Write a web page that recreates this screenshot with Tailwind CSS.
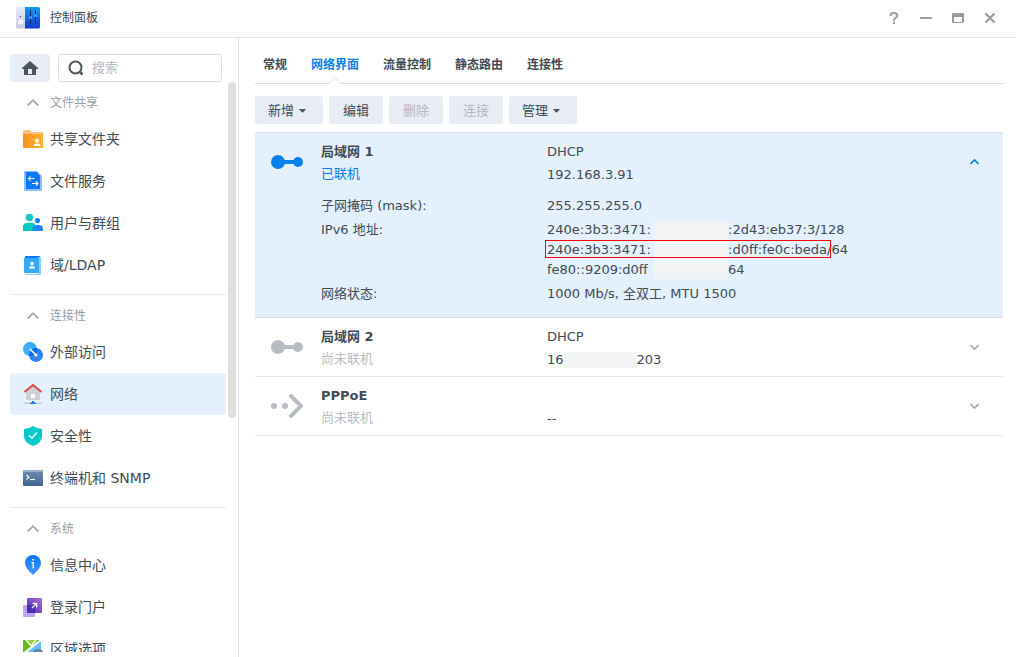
<!DOCTYPE html>
<html lang="zh-CN">
<head>
<meta charset="utf-8">
<meta name="viewport" content="width=device-width, initial-scale=1">
<title>控制面板</title>
<script src="https://cdn.jsdelivr.net/npm/@tailwindcss/browser@4"></script>
</head>
<body class="flex h-screen flex-col overflow-hidden bg-white font-['DejaVu_Sans','Noto_Sans_CJK_SC',sans-serif] text-[13px] text-[#414b55]">
<header class="flex h-[38px] shrink-0 items-center justify-between border-b border-[#e0e6ec] pr-[18px] pb-px pl-4">
  <div class="flex items-center gap-[10px]">
    <svg class="size-6" viewBox="0 0 24 24" aria-hidden="true">
      <defs>
        <linearGradient id="panelBlue" x1="0" y1="0" x2="0" y2="1"><stop stop-color="#0b9cf2"/><stop offset="1" stop-color="#1636cf"/></linearGradient>
        <linearGradient id="panelGray" x1="0" y1="0" x2="0" y2="1"><stop stop-color="#e9ebfb"/><stop offset="1" stop-color="#c5c9e4"/></linearGradient>
      </defs>
      <path d="M1.500 1H10V22.500H1.500Q0 22.500 0 21V2.500Q0 1 1.500 1Z" fill="url(#panelGray)"/>
      <path d="M9 1H22.500Q24 1 24 2.500V21Q24 22.500 22.500 22.500H9Z" fill="url(#panelBlue)"/>
      <circle cx="4.500" cy="10.500" r=".7" fill="#444b60"/><circle cx="4.500" cy="16" r="3" fill="#f6f6ff" stroke="#b9bdd8" stroke-width=".5"/>
      <path d="M14.500 4V18M19.500 4V18" stroke="#0b2a63" stroke-width="1"/>
      <circle cx="14.500" cy="11.500" r="1.600" fill="#39a7fb"/><circle cx="19.500" cy="9.500" r="1.600" fill="#39a7fb"/>
    </svg>
    <h1 class="text-xs">控制面板</h1>
  </div>
  <div class="flex gap-4 text-[#989ea7]">
    <button aria-label="帮助" class="size-4"><svg class="size-4" viewBox="0 0 16 16" fill="none" stroke="currentColor" stroke-width="2"><path d="M4.700 6V5Q4.700 3 8 3Q11.300 3 11.300 5.500Q11.300 7 9.500 7.800Q8 8.600 8 11M8 12V14"/></svg></button>
    <button aria-label="最小化" class="size-4"><svg class="size-4" viewBox="0 0 16 16" fill="currentColor"><path d="M2 7H14V9H2Z"/></svg></button>
    <button aria-label="最大化" class="size-4"><svg class="size-4" viewBox="0 0 16 16" fill="currentColor" fill-rule="evenodd"><path d="M3 3H13Q14 3 14 4V12Q14 13 13 13H3Q2 13 2 12V4Q2 3 3 3ZM4 7V12H12V7Z"/></svg></button>
    <button aria-label="关闭" class="size-4"><svg class="size-4" viewBox="0 0 16 16" fill="none" stroke="currentColor" stroke-width="2.300"><path d="M3.500 3.500L12.500 12.500M12.500 3.500L3.500 12.500"/></svg></button>
  </div>
</header>
<div class="flex min-h-0 flex-1">
  <aside class="flex w-[239px] shrink-0 flex-col border-r border-[#e0e6ec] pt-4 pr-[2px] pb-[5px] pl-[10px]">
    <div class="flex shrink-0 gap-2 pr-[14px]">
      <button aria-label="主页" class="grid h-7 w-10 place-items-center rounded-[3px] bg-[#e8edf5]"><svg class="size-4" viewBox="0 0 16 16" fill="#4b5662" fill-rule="evenodd"><path d="M8 1L16 8V9H14V15H2V9H0V8ZM6 9V14H10V9Z"/></svg></button>
      <div class="flex h-7 min-w-0 flex-1 items-center gap-2 rounded-[3px] border border-[#d5dfe8] pl-[9px]">
        <svg class="size-4 shrink-0" viewBox="0 0 16 16" fill="none" stroke="#4b5662" stroke-width="2"><circle cx="7.500" cy="7.500" r="6"/><path d="M11.500 11.500L14.500 14.500" stroke-width="2.500"/></svg>
        <input type="search" aria-label="搜索" placeholder="搜索" class="w-full min-w-0 text-[13px] outline-none placeholder:text-[#b4bac1]">
      </div>
    </div>
    <div class="flex min-h-0 flex-1 gap-[2px]">
      <nav class="min-w-0 flex-1 overflow-hidden" aria-label="控制面板">
        <section class="pb-2">
          <button aria-expanded="true" class="flex h-9 w-full items-center gap-[10px] pt-[6px] pl-4 text-xs text-[#989ea6]"><svg class="mx-[1px] h-3 w-3" viewBox="0 0 12 12" fill="none" stroke="#a5abb2" stroke-width="1.800"><path d="M.7 8.500L6 3.200L11.300 8.500"/></svg><span>文件共享</span></button>
          <a href="#share" class="flex h-[42px] items-center gap-[7px] rounded pl-[13px] text-sm">
            <svg class="size-5" viewBox="0 0 20 20"><defs><linearGradient id="folder"><stop stop-color="#fa911e"/><stop offset="1" stop-color="#ffb52f"/></linearGradient></defs><path d="M1 1H7L9 3H19Q20 3 20 4V8H0V2Q0 1 1 1Z" fill="#ffc37c"/><path d="M0 5H20V18Q20 19 19 19H1Q0 19 0 18Z" fill="url(#folder)"/><circle cx="14" cy="11.700" r="2" fill="#fff"/><path d="M10.500 17Q10.500 14.800 12.500 14.800H15.500Q17.500 14.800 17.500 17Z" fill="#fff"/></svg>
            <span>共享文件夹</span></a>
          <a href="#files" class="flex h-[42px] items-center gap-[7px] rounded pl-[13px] text-sm">
            <svg class="size-5" viewBox="0 0 20 20"><path d="M2 0H14L19 5V19Q19 20 18 20H2Q1 20 1 19V1Q1 0 2 0Z" fill="#8fbcff"/><path d="M3 1H13.500L17 4.500V18H3Z" fill="#0879fa"/><path d="M11.500 7.500H5.500M7.500 5.500L5.500 7.500L7.500 9.500M9 12.500H15M13 10.500L15 12.500L13 14.500" fill="none" stroke="#fff" stroke-width="1.200"/></svg>
            <span>文件服务</span></a>
          <a href="#users" class="flex h-[42px] items-center gap-[7px] rounded pl-[13px] text-sm">
            <svg class="size-5" viewBox="0 0 20 20"><circle cx="6.500" cy="4.500" r="3.700" fill="#1bc6cb"/><circle cx="14.500" cy="7.500" r="2.600" fill="#1484f5"/><path d="M10 18Q10 11.800 14.500 11.800Q20 11.800 20 16V18Z" fill="#2582ff"/><path d="M0 18V14Q0 9.800 5 9.800H8Q13 9.800 13 14V18Z" fill="#00ccc5"/><path d="M9 18Q9 12 13 12V18Z" fill="#079fd5"/></svg>
            <span>用户与群组</span></a>
          <a href="#domain" class="flex h-[42px] items-center gap-[7px] rounded pl-[13px] text-sm">
            <svg class="size-5" viewBox="0 0 20 20"><path d="M3 1H17V4H2V2Q2 1 3 1Z" fill="#0876f8"/><path d="M15 2H18V19Q18 20 17 20H3L2 19H15Z" fill="#8ccfff"/><path d="M1 3H16V18H2Q1 18 1 17Z" fill="#35a8fc"/><circle cx="9" cy="8.500" r="1.800" fill="#fff"/><path d="M6 13.500Q6 11.300 8 11.300H10Q12 11.300 12 13.500Z" fill="#fff"/></svg>
            <span>域/LDAP</span></a>
        </section>
        <section class="border-t border-[#e4ebf2] pb-2">
          <button aria-expanded="true" class="flex h-9 w-full items-center gap-[10px] pt-[6px] pl-4 text-xs text-[#989ea6]"><svg class="mx-[1px] h-3 w-3" viewBox="0 0 12 12" fill="none" stroke="#a5abb2" stroke-width="1.800"><path d="M.7 8.500L6 3.200L11.300 8.500"/></svg><span>连接性</span></button>
          <a href="#external" class="flex h-[42px] items-center gap-[7px] rounded pl-[13px] text-sm">
            <svg class="size-5" viewBox="0 0 20 20"><circle cx="7" cy="7" r="7" fill="#3daefb"/><circle cx="13" cy="13" r="7" fill="#2d84ff"/><path d="M6.200 14A7 7 0 0 1 14 6.100A7 7 0 0 1 6.200 14Z" fill="#006cf4"/><path d="M7 7L13 13" stroke="#fff" stroke-width="1.600"/><circle cx="13" cy="13" r="1.600" fill="#fff"/></svg>
            <span>外部访问</span></a>
          <a href="#network" aria-current="page" class="flex h-[42px] items-center gap-[7px] rounded bg-[#e4f0fc] pl-[13px] text-sm">
            <svg class="size-5" viewBox="0 0 20 20"><path d="M3 7L10 2L17 7V16H3Z" fill="#cdd1d6"/><rect x="8" y="10" width="4" height="4" fill="#fff"/><path d="M1.500 8L10 1L18.500 8" fill="none" stroke="#dc4b43" stroke-width="2"/><path d="M1 18.500H19V20H1Z" fill="#c7cdd5"/><path d="M9 17H11V18.500H13V20.500H7V18.500H9Z" fill="#1674ee"/></svg>
            <span>网络</span></a>
          <a href="#security" class="flex h-[42px] items-center gap-[7px] rounded pl-[13px] text-sm">
            <svg class="size-5" viewBox="0 0 20 20"><path d="M10 0Q14 3 19 3V10Q19 17 10 20Q1 17 1 10V3Q6 3 10 0Z" fill="#00c9ca"/><path d="M6 9.500L9 12L14 6.500" fill="none" stroke="#fff" stroke-width="1.300"/></svg>
            <span>安全性</span></a>
          <a href="#terminal" class="flex h-[42px] items-center gap-[7px] rounded pl-[13px] text-sm">
            <svg class="size-5" viewBox="0 0 20 20"><defs><linearGradient id="terminal" x1="0" y1="0" x2="0" y2="1"><stop stop-color="#7191b2"/><stop offset="1" stop-color="#3e638f"/></linearGradient></defs><path d="M1 2H19Q20 2 20 3V17Q20 18 19 18H1Q0 18 0 17V3Q0 2 1 2Z" fill="url(#terminal)"/><path d="M0 4V3Q0 2 1 2H19Q20 2 20 3V4Z" fill="#95adc7"/><path d="M3.500 7L6 9.200L3.500 11.500M7 11.500H12" fill="none" stroke="#fff" stroke-width="1.200"/></svg>
            <span>终端机和 SNMP</span></a>
        </section>
        <section class="border-t border-[#e4ebf2]">
          <button aria-expanded="true" class="flex h-9 w-full items-center gap-[10px] pt-[6px] pl-4 text-xs text-[#989ea6]"><svg class="mx-[1px] h-3 w-3" viewBox="0 0 12 12" fill="none" stroke="#a5abb2" stroke-width="1.800"><path d="M.7 8.500L6 3.200L11.300 8.500"/></svg><span>系统</span></button>
          <a href="#info" class="flex h-[42px] items-center gap-[7px] rounded pl-[13px] text-sm">
            <svg class="size-5" viewBox="0 0 20 20"><defs><linearGradient id="info" x1="0" y1="0" x2="0" y2="1"><stop stop-color="#0878fb"/><stop offset="1" stop-color="#4b94ff"/></linearGradient></defs><path d="M10 0A8 8 0 0 1 18 8Q18 13 10 20Q2 13 2 8A8 8 0 0 1 10 0Z" fill="url(#info)"/><path d="M9.200 4H10.800V5.500H9.200Z" fill="#fff"/><path d="M8.500 7.600H10.200V13.500" fill="none" stroke="#fff" stroke-width="1.300"/></svg>
            <span>信息中心</span></a>
          <a href="#portal" class="flex h-[42px] items-center gap-[7px] rounded pl-[13px] text-sm">
            <svg class="size-5" viewBox="0 0 20 20"><defs><linearGradient id="portal" x1="0" y1="1" x2="1" y2="0"><stop stop-color="#452ba8"/><stop offset="1" stop-color="#b06cdc"/></linearGradient></defs><rect y="8" width="12" height="12" rx="1" fill="#bfa4f1"/><rect x="4" y="1" width="15" height="15" rx="1" fill="url(#portal)"/><path d="M4 8H11Q12 8 12 9V16H5Q4 16 4 15Z" fill="#4d2daf"/><path d="M9 11L13.500 6.500M9.500 6.300H13.700V10.500" fill="none" stroke="#fff" stroke-width="1.300"/></svg>
            <span>登录门户</span></a>
          <a href="#region" class="flex h-[42px] items-center gap-[7px] rounded pl-[13px] text-sm">
            <svg class="size-5" viewBox="0 0 20 20"><rect y="1" width="18" height="18" rx="1" fill="#69bdfb"/><path d="M0 1H18L0 17Z" fill="#67be1c"/><path d="M3 1L8 7L13 1" fill="#95d839" stroke="#fff" stroke-width="1.300"/><path d="M0 15L18 1" stroke="#fff" stroke-width="2"/><circle cx="15" cy="15" r="5.300" fill="#587ea9"/><path d="M11 13.500H19M10 16H20M15 10V20" stroke="#7f9dbf" stroke-width=".7"/></svg>
            <span>区域选项</span></a>
        </section>
      </nav>
      <div class="h-[59%] w-2 rounded-full bg-[#dfdfdf]"></div>
    </div>
  </aside>
  <main class="min-w-0 flex-1 overflow-hidden pr-[13px] pl-4">
    <div role="tablist" class="flex h-[46px] gap-6 border-b border-[#d5dfe8] pl-2 text-xs font-bold">
      <button role="tab" aria-selected="false" class="pt-[9px]">常规</button>
      <button role="tab" aria-selected="true" class="relative pt-[9px] text-[#057feb]">网络界面<svg class="absolute -bottom-px left-1/2 h-[7px] w-3 -translate-x-1/2" viewBox="0 0 12 7"><path d="M0 6.500L6 .7L12 6.500V7H0Z" fill="#fff"/><path d="M0 6.500L6 .7L12 6.500" fill="none" stroke="#d5dfe8"/></svg></button>
      <button role="tab" aria-selected="false" class="pt-[9px]">流量控制</button>
      <button role="tab" aria-selected="false" class="pt-[9px]">静态路由</button>
      <button role="tab" aria-selected="false" class="pt-[9px]">连接性</button>
    </div>
    <div class="flex gap-[6px] pt-3 pb-2">
      <button class="flex h-7 w-[68px] items-center gap-[5px] rounded-[3px] bg-[#e8edf5] pt-px pl-[13px]">新增<svg class="h-1 w-[7px]" viewBox="0 0 7 4" fill="#4b5662"><path d="M0 0H7L4 3.500H3Z"/></svg></button>
      <button class="h-7 w-[54px] rounded-[3px] bg-[#e8edf5] pt-px">编辑</button>
      <button disabled class="h-7 w-[54px] rounded-[3px] bg-[#e8edf5] pt-px text-[#b2b8c0]">删除</button>
      <button disabled class="h-7 w-[54px] rounded-[3px] bg-[#e8edf5] pt-px text-[#b2b8c0]">连接</button>
      <button class="flex h-7 w-[68px] items-center gap-[5px] rounded-[3px] bg-[#e8edf5] pt-px pl-[13px]">管理<svg class="h-1 w-[7px]" viewBox="0 0 7 4" fill="#4b5662"><path d="M0 0H7L4 3.500H3Z"/></svg></button>
    </div>
    <section class="border-y border-[#d4e1ed] bg-[#e4f0fc] pb-[13px]">
      <div class="flex h-[58px] items-center pr-6 pl-4">
        <svg class="mr-[18px] h-[14px] w-8 shrink-0" viewBox="0 0 32 14" fill="#057feb"><circle cx="7" cy="7" r="7"/><circle cx="27" cy="7" r="5"/><path d="M12 5H24V9H12Z"/></svg>
        <div class="w-[226px] shrink-0 pt-[2px] leading-[22px]"><h2 class="font-bold">局域网 1</h2><p class="text-[#057feb]">已联机</p></div>
        <div class="flex-1 pt-[2px] leading-[23px]"><p>DHCP</p><p>192.168.3.91</p></div>
        <button aria-label="收起局域网 1" aria-expanded="true"><svg class="h-2 w-[9px]" viewBox="0 0 9 8" fill="none" stroke="#057feb" stroke-width="1.600"><path d="M.5 6L4.500 2L8.500 6"/></svg></button>
      </div>
      <dl class="mt-[5px] grid grid-cols-[226px_1fr] gap-y-1 pl-[66px] leading-5">
        <dt>子网掩码 (mask):</dt><dd>255.255.255.0</dd>
        <dt>IPv6 地址:</dt>
        <dd class="relative grid grid-cols-[107px_74px_auto] grid-rows-3 justify-start whitespace-nowrap">
          <span>240e:3b3:3471:</span><span class="row-span-3 my-px bg-[#f2f3f5]"></span><span>:2d43:eb37:3/128</span>
          <span>240e:3b3:3471:</span><span>:d0ff:fe0c:beda/64</span>
          <span>fe80::9209:d0ff</span><span>64</span>
          <span class="absolute top-5 -left-[2px] h-[18px] w-[286px] border border-[#f5040c]"></span>
        </dd>
        <dt>网络状态:</dt><dd>1000 Mb/s, 全双工, MTU 1500</dd>
      </dl>
    </section>
    <section class="flex h-[59px] items-center border-b border-[#e4ebf2] pr-6 pl-4">
      <svg class="mr-[18px] h-[14px] w-8 shrink-0" viewBox="0 0 32 14" fill="#b8bdc3"><circle cx="7" cy="7" r="7"/><circle cx="27" cy="7" r="5"/><path d="M12 5H24V9H12Z"/></svg>
      <div class="w-[226px] shrink-0 pt-[2px] leading-[22px]"><h2 class="font-bold">局域网 2</h2><p class="text-[#b8bdc3]">尚未联机</p></div>
      <div class="flex-1 pt-[2px] leading-[23px]"><p>DHCP</p><p class="flex items-center"><span>16</span><span class="h-4 w-[73px] bg-[#f2f3f5]"></span><span>203</span></p></div>
      <button aria-label="展开局域网 2" aria-expanded="false"><svg class="h-2 w-[9px]" viewBox="0 0 9 8" fill="none" stroke="#a5abb2" stroke-width="1.600"><path d="M.5 2L4.500 6L8.500 2"/></svg></button>
    </section>
    <section class="flex h-[59px] items-center border-b border-[#e4ebf2] pr-6 pl-4">
      <svg class="mr-[18px] h-6 w-8 shrink-0" viewBox="0 0 32 24" fill="#b8bdc3"><circle cx="3" cy="12" r="3"/><circle cx="14" cy="12" r="3"/><path d="M20 2L30 12L20 22" fill="none" stroke="#b8bdc3" stroke-width="4" stroke-linecap="round"/></svg>
      <div class="w-[226px] shrink-0 pt-[2px] leading-[22px]"><h2 class="font-bold">PPPoE</h2><p class="text-[#b8bdc3]">尚未联机</p></div>
      <div class="flex-1 pt-[25px] leading-[23px]"><p>--</p></div>
      <button aria-label="展开 PPPoE" aria-expanded="false"><svg class="h-2 w-[9px]" viewBox="0 0 9 8" fill="none" stroke="#a5abb2" stroke-width="1.600"><path d="M.5 2L4.500 6L8.500 2"/></svg></button>
    </section>
  </main>
</div>
</body>
</html>
